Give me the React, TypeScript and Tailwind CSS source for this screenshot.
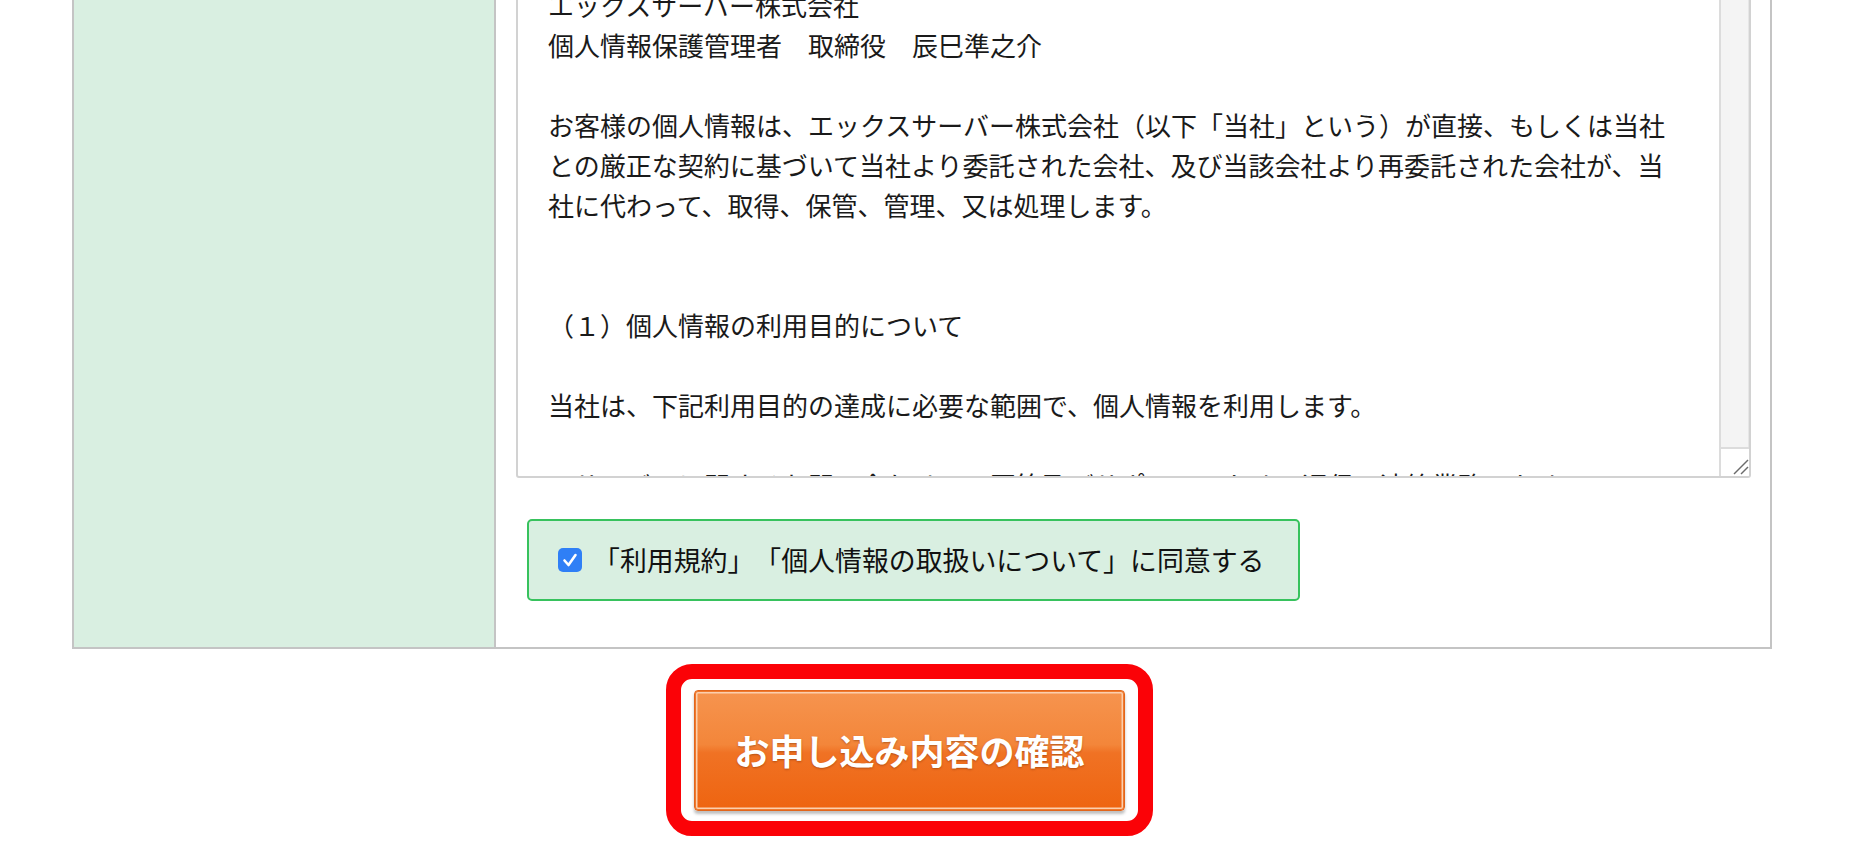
import React from 'react';

const policyLines: string[] = [
  'エックスサーバー株式会社',
  '個人情報保護管理者　取締役　辰巳準之介',
  '',
  'お客様の個人情報は、エックスサーバー株式会社（以下「当社」という）が直接、もしくは当社',
  'との厳正な契約に基づいて当社より委託された会社、及び当該会社より再委託された会社が、当',
  '社に代わって、取得、保管、管理、又は処理します。',
  '',
  '',
  '（１）個人情報の利用目的について',
  '',
  '当社は、下記利用目的の達成に必要な範囲で、個人情報を利用します。',
  '',
  '・サービスに関するお問い合わせへの回答及びサポートのための通信、連絡業務のため',
];

const PolicyBox: React.FC = () => (
  <div className="flex h-[505px] overflow-hidden rounded-[3px] border-2 border-[#d2d2d2] bg-white">
    <div className="flex-1 overflow-hidden pt-[10px] pl-[30px] text-[26px] leading-[40px] text-[#1a1a1a]">
      {policyLines.map((line, i) => (
        <div key={i} className="h-[40px] whitespace-nowrap">
          {line}
        </div>
      ))}
    </div>
    {/* scroll track + resize corner */}
    <div className="flex w-[30px] flex-col border-l-2 border-[#dcdcdc]">
      <div className="flex-1 border-r border-[#e6e6e6] bg-[#f4f4f4]" />
      <div className="h-[29px] border-t-2 border-[#dcdcdc] bg-white">
        <svg width="28" height="27" viewBox="0 0 28 27">
          <line x1="13" y1="25" x2="27" y2="11" stroke="#6b6b6b" strokeWidth="1.5" />
          <line x1="20" y1="25" x2="27" y2="18" stroke="#6b6b6b" strokeWidth="1.5" />
        </svg>
      </div>
    </div>
  </div>
);

const AgreeBox: React.FC = () => (
  <div className="mt-[41px] ml-[11px] inline-flex h-[82px] items-center rounded-[5px] border-2 border-[#37c25d] bg-[#d9efe1] pl-[29px] pr-[34px]">
    <span className="flex h-[24px] w-[24px] items-center justify-center rounded-[5px] bg-[#2f7ff6]">
      <svg width="24" height="24" viewBox="0 0 24 24">
        <polyline points="6.5,12.5 10.5,17 17.5,7" fill="none" stroke="#fff" strokeWidth="2.6" strokeLinecap="round" strokeLinejoin="round" />
      </svg>
    </span>
    <span className="ml-[11px] text-[26.9px] leading-[40px] text-[#111]">
      「利用規約」「個人情報の取扱いについて」に同意する
    </span>
  </div>
);

export default function App() {
  return (
    <div className="min-h-screen overflow-hidden bg-white font-['Noto_Sans_CJK_JP','Liberation_Sans',sans-serif] [text-spacing-trim:space-all]">
      <div className="-mt-[49px]">
        <div className="ml-[72px] flex w-[1700px] border-2 border-[#c4c4c4]">
          <div className="w-[422px] shrink-0 border-r-2 border-[#c4c4c4] bg-[#d9efe1]" />
          <div className="flex-1 pt-[20px] pr-[19px] pb-[46px] pl-[20px]">
            <PolicyBox />
            <AgreeBox />
          </div>
        </div>

        <div className="mt-[15px] ml-[666px] inline-block rounded-[26px] border-[15px] border-[#fb0207] bg-white px-[13px] pt-[11px] pb-[10px]">
          <button className="flex h-[121px] w-[431px] items-center justify-center rounded-[4px] border border-[#e2661c] bg-[linear-gradient(to_bottom,#f6944f_0%,#f3863a_45%,#f07224_52%,#ee6410_100%)] text-[35px] font-bold text-white shadow-[inset_0_0_0_1px_#f07a2e,inset_0_0_0_2.5px_#fbcfae,0_3px_3px_rgba(0,0,0,0.25)] [text-shadow:0_1px_2px_rgba(110,40,0,0.45)]">
            お申し込み内容の確認
          </button>
        </div>
      </div>
    </div>
  );
}
